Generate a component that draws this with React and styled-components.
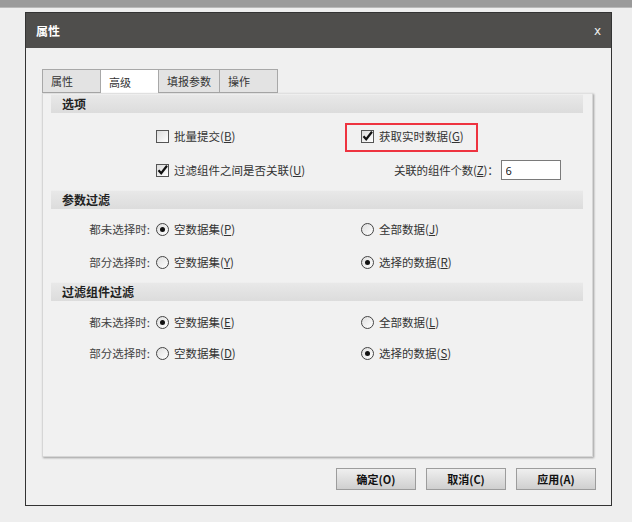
import React from 'react';
import styled, { createGlobalStyle } from 'styled-components';

const GlobalStyle = createGlobalStyle`
  body {
    margin: 0;
    background: #eeeeee;
    font-family: "Noto Sans CJK SC", "Noto Sans", sans-serif;
    color: #333;
  }
`;

const App = () => {
  return (
    <>
      <GlobalStyle />
      <TopBar />
      <Dialog>
        <TitleBar>
          <TitleText>属性</TitleText>
          <Close>x</Close>
        </TitleBar>
        <Body>
          <TabList>
            <Tab width={58}>属性</Tab>
            <Tab width={58} active>高级</Tab>
            <Tab width={61}>填报参数</Tab>
            <Tab width={59} last>操作</Tab>
          </TabList>
          <Panel>
            <Band>选项</Band>
            <Rows top={13} gap={14} bottom={10}>
              <Row>
                <span />
                <Option>
                  <CheckBox />
                  <span>批量提交(<U>B</U>)</span>
                </Option>
                <Cell>
                  <Option>
                    <CheckBox checked />
                    <span>获取实时数据(<U>G</U>)</span>
                  </Option>
                  <Highlight />
                </Cell>
              </Row>
              <Row>
                <span />
                <Option>
                  <CheckBox checked />
                  <span>过滤组件之间是否关联(<U>U</U>)</span>
                </Option>
                <CountCell>
                  <CountLabel>关联的组件个数(<U>Z</U>)：</CountLabel>
                  <NumberInput defaultValue="6" />
                </CountCell>
              </Row>
            </Rows>

            <Band>参数过滤</Band>
            <Rows top={10} gap={13} bottom={10}>
              <Row>
                <Label>都未选择时:</Label>
                <Option>
                  <Radio checked />
                  <span>空数据集(<U>P</U>)</span>
                </Option>
                <Option>
                  <Radio />
                  <span>全部数据(<U>J</U>)</span>
                </Option>
              </Row>
              <Row>
                <Label>部分选择时:</Label>
                <Option>
                  <Radio />
                  <span>空数据集(<U>Y</U>)</span>
                </Option>
                <Option>
                  <Radio checked />
                  <span>选择的数据(<U>R</U>)</span>
                </Option>
              </Row>
            </Rows>

            <Band>过滤组件过滤</Band>
            <Rows top={11} gap={11} bottom={0}>
              <Row>
                <Label>都未选择时:</Label>
                <Option>
                  <Radio checked />
                  <span>空数据集(<U>E</U>)</span>
                </Option>
                <Option>
                  <Radio />
                  <span>全部数据(<U>L</U>)</span>
                </Option>
              </Row>
              <Row>
                <Label>部分选择时:</Label>
                <Option>
                  <Radio />
                  <span>空数据集(<U>D</U>)</span>
                </Option>
                <Option>
                  <Radio checked />
                  <span>选择的数据(<U>S</U>)</span>
                </Option>
              </Row>
            </Rows>
          </Panel>
          <Footer>
            <Button>确定(O)</Button>
            <Button>取消(C)</Button>
            <Button>应用(A)</Button>
          </Footer>
        </Body>
      </Dialog>
    </>
  );
};

const CheckBox = ({ checked }) => (
  <Box>
    {checked && (
      <svg width="13" height="13" viewBox="0 0 13 13">
        <path d="M2.5 6.2 L5.2 9.2 L11 1.8" fill="none" stroke="#111" strokeWidth="2.2" />
      </svg>
    )}
  </Box>
);

const Radio = ({ checked }) => <Circle>{checked && <Dot />}</Circle>;

const TopBar = styled.div`
  height: 7px;
  background: #9a9a9a;
  border-bottom: 1px solid #b8b8b8;
`;

const Dialog = styled.div`
  box-sizing: border-box;
  margin: 4px 0 0 25px;
  width: 587px;
  height: 494px;
  border: 1px solid #333;
  background: #f0f0f0;
  display: flex;
  flex-direction: column;
`;

const TitleBar = styled.div`
  height: 35px;
  background: #4f4e4c;
  display: flex;
  justify-content: space-between;
  align-items: center;
  padding: 0 10px;
  color: #fff;
`;

const TitleText = styled.div`
  font-size: 12px;
  font-weight: 700;
`;

const Close = styled.div`
  font-family: "DejaVu Sans", sans-serif;
  font-size: 12px;
  color: #eee;
`;

const Body = styled.div`
  padding: 21px 15px 15px 16px;
  display: flex;
  flex-direction: column;
`;

const TabList = styled.div`
  display: flex;
  height: 24px;
`;

const Tab = styled.div`
  box-sizing: border-box;
  width: ${(p) => p.width}px;
  height: 24px;
  padding: 0 8px;
  display: flex;
  align-items: center;
  white-space: nowrap;
  font-size: 11px;
  color: #333;
  border: 1px solid #a8a8a8;
  border-right: ${(p) => (p.last ? '1px solid #a8a8a8' : 'none')};
  border-bottom: ${(p) => (p.active ? 'none' : '1px solid #a8a8a8')};
  background: ${(p) => (p.active ? '#ffffff' : '#e3e3e3')};
`;

const Panel = styled.div`
  box-sizing: border-box;
  width: 551px;
  height: 364px;
  padding: 0 9px 0 8px;
  background: #f1f1f1;
  border: 1px solid #d6d6d6;
  border-top-color: #e0e0e0;
  box-shadow: 1px 1px 2px rgba(0, 0, 0, 0.35);
`;

const Band = styled.div`
  height: 19px;
  padding-left: 11px;
  display: flex;
  align-items: center;
  font-size: 12px;
  font-weight: 700;
  color: #222;
  background: linear-gradient(#f2f2f2 0, #e8e8e8 8%, #dcdcdc 100%);
`;

const Rows = styled.div`
  display: flex;
  flex-direction: column;
  gap: ${(p) => p.gap}px;
  padding: ${(p) => p.top}px 0 ${(p) => p.bottom}px;
`;

const Row = styled.div`
  display: grid;
  grid-template-columns: 105px 205px 1fr;
  height: 20px;
  align-items: center;
  font-size: 11.5px;
  color: #333;
`;

const Label = styled.div`
  text-align: right;
  padding-right: 6px;
  color: #444;
`;

const Option = styled.div`
  display: flex;
  align-items: center;
  gap: 5px;
  white-space: nowrap;
`;

const Cell = styled.div`
  position: relative;
`;

const Highlight = styled.div`
  position: absolute;
  left: -16px;
  top: -5px;
  width: 133px;
  height: 29px;
  box-sizing: border-box;
  border: 2px solid #ee3340;
`;

const CountCell = styled.div`
  display: flex;
  align-items: center;
  gap: 2px;
  padding-left: 33px;
  white-space: nowrap;
`;

const CountLabel = styled.span`
  letter-spacing: -0.2px;
`;

const NumberInput = styled.input`
  box-sizing: border-box;
  width: 60px;
  height: 20px;
  border: 1px solid #7a7a7a;
  background: #fff;
  padding: 0 4px;
  font-family: "Noto Sans", sans-serif;
  font-size: 11px;
  color: #222;
  outline: none;
`;

const U = styled.span`
  text-decoration: underline;
`;

const Box = styled.div`
  box-sizing: border-box;
  width: 13px;
  height: 13px;
  border: 1px solid #555;
  background: linear-gradient(135deg, #dcdcdc, #ffffff);
  display: flex;
  align-items: center;
  justify-content: center;
  flex-shrink: 0;
  svg {
    margin: -1px;
  }
`;

const Circle = styled.div`
  box-sizing: border-box;
  width: 13px;
  height: 13px;
  border-radius: 50%;
  border: 1px solid #444;
  background: linear-gradient(135deg, #dedede, #ffffff);
  display: flex;
  align-items: center;
  justify-content: center;
  flex-shrink: 0;
`;

const Dot = styled.div`
  width: 5px;
  height: 5px;
  border-radius: 50%;
  background: #111;
`;

const Footer = styled.div`
  display: flex;
  justify-content: flex-end;
  gap: 10px;
  margin-top: 11px;
`;

const Button = styled.button`
  box-sizing: border-box;
  width: 80px;
  height: 22px;
  border: 1px solid #9c9c9c;
  background: linear-gradient(#efefef, #cfcfcf);
  font-family: "Noto Sans CJK SC", sans-serif;
  font-size: 11px;
  font-weight: 700;
  color: #111;
  padding: 0;
`;

export default App;
